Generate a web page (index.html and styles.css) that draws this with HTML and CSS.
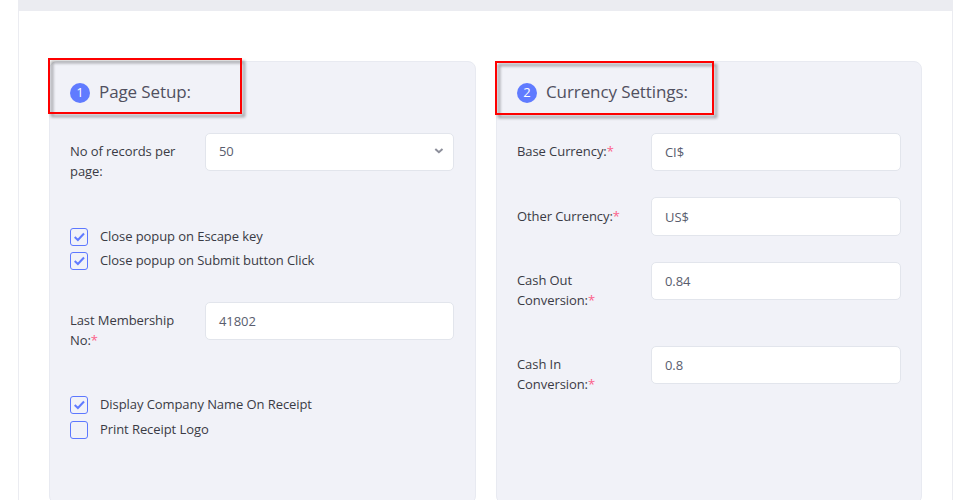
FILE: index.html
```html
<!DOCTYPE html>
<html lang="en">
<head>
<meta charset="utf-8">
<title>Settings</title>
<link rel="stylesheet" href="styles.css">
</head>
<body>
<main class="panel">
  <div class="panel-bar"></div>
  <div class="cards">
    <section class="card">
      <div class="highlight highlight-page"></div>
      <h2 class="card-title"><span class="step">1</span><span>Page Setup:</span></h2>
      <div class="row">
        <label class="label">No of records per page:</label>
        <div class="field select"><span>50</span>
          <svg class="chevron" width="10" height="8" viewBox="0 0 10 8"><path d="M1.3 2 L4.9 5.2 L8.5 2"/></svg>
        </div>
      </div>
      <div class="checks checks-popup">
        <div class="check"><span class="box"><svg width="16" height="16" viewBox="0 0 16 16"><path d="M3.7 8 L6.9 11 L13 4.5"/></svg></span><span>Close popup on Escape key</span></div>
        <div class="check"><span class="box"><svg width="16" height="16" viewBox="0 0 16 16"><path d="M3.7 8 L6.9 11 L13 4.5"/></svg></span><span>Close popup on Submit button Click</span></div>
      </div>
      <div class="row">
        <label class="label">Last Membership No:<span class="required">*</span></label>
        <div class="field">41802</div>
      </div>
      <div class="checks checks-receipt">
        <div class="check"><span class="box"><svg width="16" height="16" viewBox="0 0 16 16"><path d="M3.7 8 L6.9 11 L13 4.5"/></svg></span><span>Display Company Name On Receipt</span></div>
        <div class="check"><span class="box"></span><span>Print Receipt Logo</span></div>
      </div>
    </section>
    <section class="card">
      <div class="highlight highlight-currency"></div>
      <h2 class="card-title"><span class="step">2</span><span>Currency Settings:</span></h2>
      <div class="currency-rows">
        <div class="row"><label class="label">Base Currency:<span class="required">*</span></label><div class="field">CI$</div></div>
        <div class="row"><label class="label label-tall">Other Currency:<span class="required">*</span></label><div class="field field-tall">US$</div></div>
        <div class="row row-double"><label class="label">Cash Out Conversion:<span class="required">*</span></label><div class="field">0.84</div></div>
        <div class="row row-double"><label class="label">Cash In Conversion:<span class="required">*</span></label><div class="field">0.8</div></div>
      </div>
    </section>
  </div>
</main>
</body>
</html>
```
FILE: styles.css
```css
* { box-sizing: border-box; }
body {
  margin: 0;
  height: 500px;
  overflow: hidden;
  background: #fff;
  color: #3a3b45;
  font: 13px/20px "Open Sans", sans-serif;
  letter-spacing: -.075px;
}
.panel {
  width: 935px;
  height: 520px;
  margin-left: 18px;
  border: solid #ebecf1;
  border-width: 0 1px;
}
.panel-bar { height: 11px; background: #ebecf1; }
.cards {
  display: grid;
  grid-template-columns: 427px 426px;
  gap: 20px;
  padding: 50px 30px 0;
}
.card {
  position: relative;
  height: 443px;
  padding: 20px;
  border: 1px solid #e8eaf1;
  border-radius: 8px;
  background: #f1f2f8;
}
.card-title {
  display: flex;
  align-items: center;
  gap: 9px;
  height: 20px;
  margin: 0 0 31px;
  color: #50505f;
  font-size: 17px;
  font-weight: 400;
  letter-spacing: -.1px;
}
.step {
  width: 20px;
  height: 20px;
  margin-top: 2px;
  border-radius: 50%;
  background: #607bff;
  color: #fff;
  font-size: 13px;
  line-height: 19px;
  text-align: center;
}
.highlight {
  position: absolute;
  border: 2px solid #fe0000;
  filter: drop-shadow(3px 3px 1.5px rgba(0, 0, 0, .4));
}
.highlight-page { left: -2px; top: -4px; width: 194px; height: 56px; }
.highlight-currency { left: -2px; top: -1px; width: 219px; height: 54px; }
.row {
  display: grid;
  grid-template-columns: 125px 249px;
  column-gap: 10px;
  align-items: start;
}
.label { padding-top: 8px; }
.label-tall { padding-top: 9px; }
.required { color: #fc6189; }
.field {
  display: flex;
  align-items: center;
  height: 38px;
  padding: 0 13px 1px;
  border: 1px solid #e2e5ec;
  border-radius: 5px;
  background: #fff;
  color: #595d6e;
}
.field-tall { height: 39px; padding-top: 1px; padding-bottom: 0; }
.select { justify-content: space-between; padding-right: 9px; padding-bottom: 2px; }
.chevron { fill: none; stroke: #8d8f9b; stroke-width: 2; }
.checks { display: grid; }
.checks-popup { gap: 6px; margin: 47px 0 32px; }
.checks-receipt { gap: 7px; margin-top: 46px; }
.check { display: flex; align-items: center; gap: 12px; height: 18px; }
.check > span:last-child { margin-top: -2px; }
.box {
  width: 18px;
  height: 18px;
  border: 1px solid #5d78ff;
  border-radius: 3px;
}
.check > .box:first-child { margin-top: 0; }
.box svg { display: block; fill: none; stroke: #607bff; stroke-width: 2; }
.currency-rows { display: grid; gap: 26px; }
.currency-rows .row { grid-template-columns: 124px 250px; }
.currency-rows .row-double { height: 58px; }
```
